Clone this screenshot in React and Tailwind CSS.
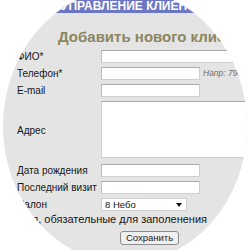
import React from "react";

function Row({ label, children, className = "h-[17px]" }) {
  return (
    <div className={`flex items-center ${className}`}>
      <div className="w-[98px] shrink-0 pl-[14px] whitespace-nowrap leading-[13px]">{label}</div>
      {children}
    </div>
  );
}

const inputCls =
  "h-[13px] bg-white border border-[#cfcfcf] border-t-[#ababab] border-l-[#bdbdbd] shrink-0";

export default function App() {
  return (
    <div className="w-[250px] h-[250px] overflow-hidden bg-white font-['Liberation_Sans',Arial,sans-serif]">
      {/* lens */}
      <div className="ml-[3px] -mt-[11px] w-[244px] h-[274px] rounded-[50%] overflow-hidden bg-[#e4e4e4]">
        <div className="h-[24px] bg-[#6b77c5] pt-[11px] pl-[58px] text-[12px] font-bold leading-[13px] text-white whitespace-nowrap">
          УПРАВЛЕНИЕ КЛИЕНТАМИ
        </div>

        <h2 className="pt-[15px] pb-[3px] pl-[55px] text-[15px] leading-[17px] font-bold text-[#8b8660] whitespace-nowrap">
          Добавить нового клиента
        </h2>

        <div className="flex flex-col text-[10px] text-[#141414]">
          <Row label="ФИО*">
            <div className={`${inputCls} w-[160px]`} />
          </Row>
          <Row label="Телефон*">
            <div className={`${inputCls} w-[99px]`} />
            <span className="ml-[3px] text-[8.5px] italic text-[#6f6f6f] whitespace-nowrap">
              Напр: 79001234567
            </span>
          </Row>
          <Row label="E-mail">
            <div className={`${inputCls} w-[99px]`} />
          </Row>
          <Row label="Адрес" className="h-[63px]">
            <div className="self-start mt-[2px] h-[57px] w-[160px] shrink-0 bg-white border border-[#cfcfcf] border-t-[#a9a9a9]" />
          </Row>
          <Row label="Дата рождения">
            <div className={`${inputCls} w-[99px]`} />
          </Row>
          <Row label="Последний визит">
            <div className={`${inputCls} w-[99px]`} />
          </Row>
          <Row label="Салон">
            <div className="h-[13px] w-[86px] shrink-0 bg-white border border-[#cfcfcf] flex items-center justify-between pl-[3px] pr-[4px] text-[9.5px] leading-[11px]">
              <span>8 Небо</span>
              <svg width="6" height="4" viewBox="0 0 6 4">
                <polygon points="0,0 6,0 3,4" fill="#111" />
              </svg>
            </div>
          </Row>

          <div className="h-[16px] pl-[9px] text-[11px] leading-[12px] whitespace-nowrap">
            Поля, обязательные для заполенения
          </div>

          <div className="pl-[117px] pt-[2px]">
            <button className="h-[14px] w-[59px] bg-[#efefef] border border-[#8c8c8c] rounded-[3px] text-[9.5px] leading-[12px] text-[#222] flex items-center justify-center">
              Сохранить
            </button>
          </div>
        </div>
      </div>
    </div>
  );
}
